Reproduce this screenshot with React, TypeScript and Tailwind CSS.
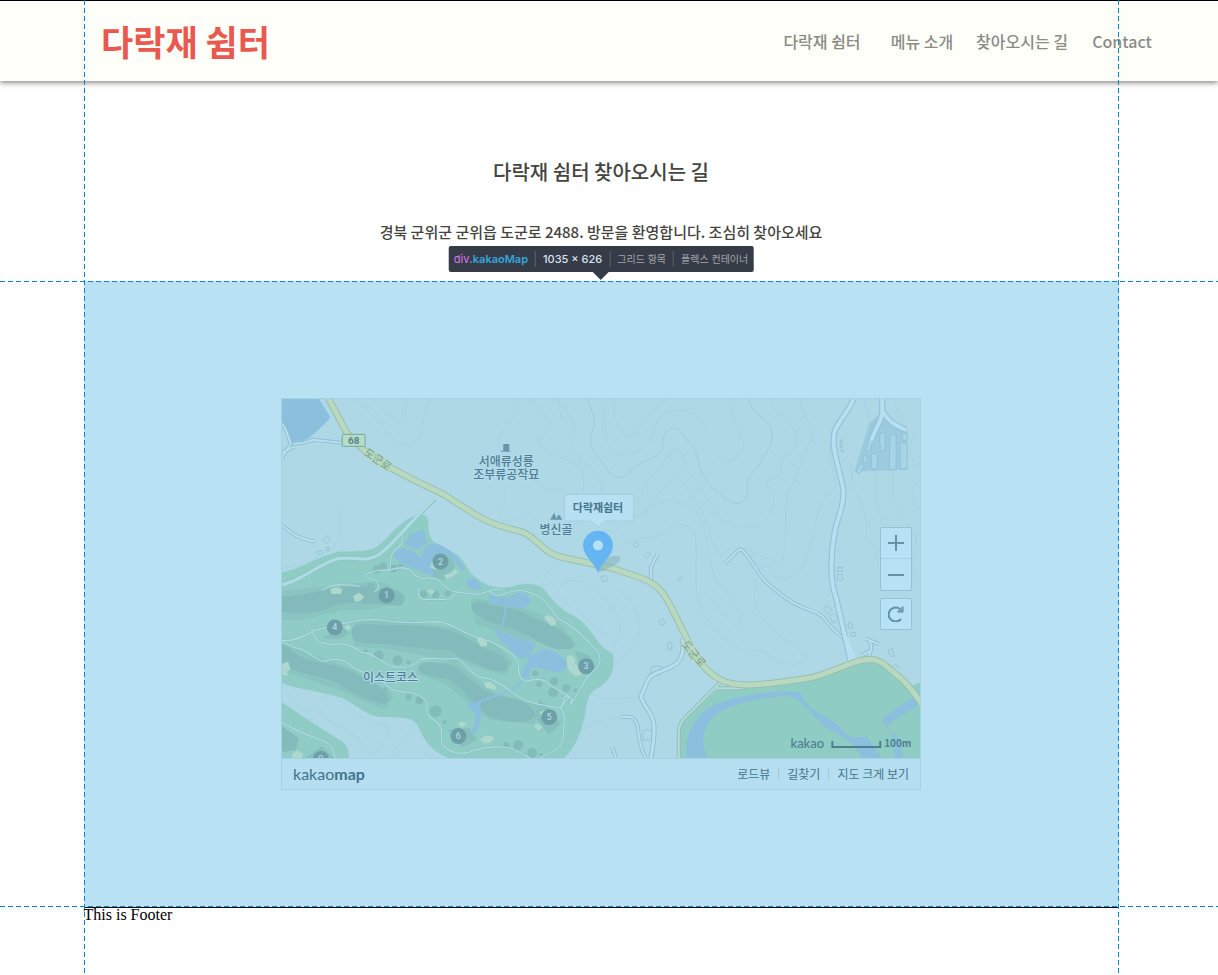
import React from 'react';

const NAV_ITEMS = ['다락재 쉼터', '메뉴 소개', '찾아오시는 길', 'Contact'];

const HOLES = [
  { n: 1, x: 105, y: 197 },
  { n: 2, x: 159, y: 163 },
  { n: 3, x: 305, y: 268 },
  { n: 4, x: 53, y: 229 },
  { n: 5, x: 268, y: 319 },
  { n: 6, x: 177, y: 338 },
  { n: 9, x: 39, y: 361 },
];

const CONTOURS = [
  'M75 0C90 18 98 22 107 35C115 45 125 48 132 45C142 38 140 20 148 0',
  'M90 0C102 12 108 20 118 23C128 20 122 8 126 0',
  'M232 0C238 12 230 22 222 30C214 40 216 55 228 62C240 66 246 72 252 80C262 92 270 92 282 90',
  'M251 0C256 12 272 20 270 28C264 38 252 40 262 50C275 58 295 62 300 72C306 82 300 92 304 98',
  'M277 0C285 15 298 25 292 38C288 52 300 60 310 70C322 82 320 92 322 96',
  'M318 0C328 15 322 35 328 48C336 60 350 56 362 50C378 38 370 14 390 12C412 8 415 20 428 28',
  'M334 0C330 15 338 34 346 38C358 40 356 28 366 18C376 6 384 2 390 0',
  'M352 108C364 95 362 82 374 74C386 64 384 50 398 50C405 60 402 68 412 78C420 90 424 96 432 108C438 118 446 128 456 128C468 130 484 128 490 112C500 96 482 86 486 82C510 78 492 66 510 54C522 40 512 22 496 12C490 8 492 4 492 0',
  'M355 118C370 114 372 100 382 90C394 80 392 74 396 76C402 84 410 94 418 106C428 122 426 138 440 158C456 136 476 160 500 164C508 158 502 120 508 92C520 74 520 60 528 46C538 28 518 12 520 0',
  'M322 130C338 140 340 120 356 118C370 112 382 96 396 104C416 106 420 118 424 134C430 150 428 168 436 184C450 196 462 214 462 234C452 228 440 214 430 200',
  'M330 155C350 140 366 136 374 140C388 128 400 120 414 132C418 158 412 180 418 204C424 222 436 236 452 246C470 258 480 246 492 260C510 268 520 268 525 260C520 248 500 242 484 222C468 204 474 180 482 164',
  'M454 0C448 20 460 34 464 46C460 60 446 68 436 58',
  'M553 34C545 48 552 70 556 88C545 98 536 108 534 132C526 150 530 170 508 180C490 180 478 170 470 156',
  'M584 0C588 20 590 30 600 52',
  'M562 60C575 60 570 78 574 90C584 110 588 124 586 140C596 148 598 152 597 170',
  'M595 72V98C600 120 606 130 600 140',
  'M613 72V100C620 120 632 128 636 140C632 160 630 178 640 184',
  'M640 80C630 88 630 102 640 112M614 0C618 20 626 32 634 36C626 50 632 66 640 70',
  'M216 118C230 100 220 95 225 85M216 118C225 128 245 120 252 110',
  'M276 0C280 8 276 14 284 22M258 200C262 178 268 166 284 162M278 192C284 176 300 180 316 194C330 206 345 220 336 244',
  'M276 192C278 206 302 214 310 224C326 240 340 240 332 256',
  'M336 192C356 204 364 226 354 244C346 258 338 262 334 268M311 294C318 306 345 298 362 298M288 346C296 330 322 320 346 318',
  'M35 305C40 298 50 294 57 300C74 316 84 322 105 328C108 340 98 346 92 358C84 352 80 340 62 332C48 324 38 316 35 305',
  'M0 170C20 166 36 160 50 150C62 138 60 120 56 108',
  'M1 288C14 302 16 312 24 313C34 306 40 320 56 326M134 324C128 340 112 346 110 360M147 350C142 354 146 358 150 360',
];

const GOLF_PATHS = [
  'M121 135C122 146 118 148 111 154C106 162 112 168 106 172C96 170 88 174 84 176C82 182 94 178 96 184C98 188 97 192 93 193',
  'M107 172C118 168 128 168 132 176C142 184 150 176 158 182C162 190 170 192 176 194L196 196C206 194 214 188 222 192',
  'M0 242C12 244 26 236 32 232C50 228 74 221 91 221C108 222 112 224 127 224C140 225 150 222 161 224C174 227 176 232 186 235C196 240 200 240 209 243C222 250 236 256 237 266C238 276 238 282 246 283C256 280 262 280 268 286L289 299',
  'M31 234C33 242 38 245 50 246C66 244 74 250 80 254C92 254 98 264 110 268C120 270 132 270 137 262C144 258 160 262 174 260C186 262 190 280 204 280C220 282 232 298 246 303C260 308 270 308 279 310L288 299',
  'M0 243L12 249C26 250 32 262 43 263C52 260 62 260 70 268C82 276 92 276 104 286C114 298 134 290 144 302C148 308 142 314 150 320C162 328 160 332 160 344C164 354 176 356 186 355C198 350 214 348 230 350L249 360',
  'M208 192C216 204 226 190 240 192C252 194 262 200 269 209C276 222 282 222 290 228C300 234 308 246 317 253C322 264 318 268 308 277C302 284 296 298 289 307L291 300L284 298L280 310C286 320 282 330 282 340C280 352 268 354 259 360',
  'M137 190C136 202 142 201 150 201H162C172 201 172 196 178 192',
  'M40 192C50 184 66 186 78 188',
  'M0 324C12 332 28 338 42 343C50 346 52 352 53 360',
];

const SMALL_ROADS = [
  'M0 25C5 30 6 38 9 45C5 52 2 53 0 60M0 54L12 48',
  'M0 126C10 136 18 140 33 143',
  'M377 155L370 169V184',
  'M444 164C450 162 456 150 461 151C468 156 476 174 486 184C498 194 506 202 518 207C528 212 536 212 543 219C550 228 558 238 566 241',
  'M331 348L335 360',
  'M340 319C350 318 354 318 357 329C358 342 360 352 365 360',
  'M588 262L591 250L590 242M585 240L599 246M591 252L582 257',
];

const TREES = [
  [89, 187, 3], [84, 253, 2], [97, 257, 5], [116, 262, 5], [127, 264, 2], [127, 299, 3], [138, 302, 4], [154, 313, 6],
  [163, 324, 2], [104, 291, 2], [142, 196, 4], [154, 196, 4], [166, 195, 3], [95, 171, 4], [101, 168, 4], [112, 170, 4],
  [254, 275, 3], [258, 286, 3], [273, 283, 4], [272, 294, 5], [285, 290, 4], [294, 292, 2], [225, 347, 3], [237, 347, 5],
  [251, 355, 5], [260, 357, 2], [119, 168, 3],
];

const SAND = [
  'M49 191l5-2l6 2l-1 4h-9z',
  'M72 198l5-3l5 3l-3 4l-5 1z',
  'M0 266l6-2l2 7l-4 3l2 3l-6-1z',
  'M149 168l4-9l3 3l-2 9z',
  'M163 177l6-2l4-4l4 2l-5 4l-7 3z',
  'M196 241l3-2l6 4v4l-5 1z',
  'M203 285l5-1l6 4v3l-9-2z',
  'M177 326l3-2l5 2l-4 3z',
  'M199 341l6-3l7 1l-2 5l-7 1z',
  'M263 219l4-2l6 3l2 6l-5 1z',
  'M286 259l5-2l3 4l-1 4l6 5l1 6l-5 2l-8-7z',
  'M259 314l5-2l1 4l-4 2zM253 328l4-2l4 3l-4 3z',
  'M11 356l4-3l6 3l-2 4h-8zM63 229l3-2l3 2l-3 3z',
  'M146 193l3-2l4 2l-3 3z',
];

const MAIN_ROAD =
  'M46 -2L65 34Q84 56 107 68L134 82L161 95L194 116C210 126 226 130 240 133C256 138 262 156 282 159L332 170L356 178C376 184 384 196 390 208L406 240C414 258 422 270 434 278C448 288 466 288 491 285C516 282 534 280 548 274L577 263C596 258 602 264 611 272Q630 286 642 307';

function MapDrawing() {
  return (
    <svg viewBox="0 0 640 360" preserveAspectRatio="xMidYMid slice" className="block h-full w-full" role="img" aria-label="다락재쉼터 지도">
      <rect width="640" height="360" fill="#aed8e6" />
      <g fill="none" stroke="#a7d2e1">
        {CONTOURS.map((d) => <path key={d} d={d} />)}
      </g>
      <path
        d="M306 0C312 14 314 20 313 28C309 36 309 44 311 50C320 60 328 74 332 78C340 80 344 78 349 73C356 66 362 62 370 60C380 54 383 50 382 42C384 34 388 28 393 29C402 30 404 40 412 48C420 58 414 68 427 83C436 94 446 102 456 105C466 104 469 96 466 86C468 74 480 68 482 60C490 48 495 38 489 26C484 18 468 14 469 0"
        fill="none"
        stroke="#9dccdf"
      />

      {/* lake and the lanes round it */}
      <path d="M0 0H37L48 17L47 21L32 35Q20 45 10 45L6 34L0 25Z" fill="#8bbfde" />
      <path d="M61 44L31 41L22 44L9 45" fill="none" stroke="#93bfd0" strokeWidth="4" />
      <path d="M61 44L31 41L22 44L9 45" fill="none" stroke="#b6dff0" strokeWidth="2" />

      {/* golf course */}
      <path
        d="M0 174C20 170 36 158 57 153C72 153 88 154 97 147C108 138 118 122 134 117C145 114 147 118 147 128C146 144 160 148 168 152C184 158 184 172 196 180C208 190 222 190 232 188C242 184 256 184 264 192C274 206 282 212 292 217C308 226 312 238 322 249L332 256C334 272 330 282 318 289C308 294 307 300 305 310C302 332 294 350 283 360H167C150 354 142 342 136 327C130 318 116 320 101 319C84 318 74 306 61 300C44 294 20 292 0 285Z"
        fill="#8fccc5"
      />
      <path d="M0 304L31 325L61 344Q68 349 67 360H0Z" fill="#8fccc5" />
      <g fill="#89c4c0" stroke="#89c4c0" strokeWidth="9" strokeLinejoin="round">
        <path d="M0 197L60 190L100 188L120 200L85 207L62 207L20 217H0Z" />
        <path d="M76 227L117 227L174 234L212 250L226 264L222 272L181 260L111 247L76 244Z" />
        <path d="M0 250L67 274L107 299L101 306L54 286L0 267Z" />
        <path d="M140 272L171 267L212 299L252 310L250 321L209 317L167 282Z" />
        <path d="M194 204L242 214L276 229L290 246L242 236L198 222Z" />
      </g>
      <g fill="#83babb">
        <path d="M0 198C20 198 36 192 52 190C70 188 90 186 98 192H116C124 198 124 206 118 207C104 208 98 204 86 206C68 202 60 206 50 208C34 216 20 216 0 213Z" />
        <path d="M74 227C90 224 100 228 117 227C140 228 160 228 176 235C192 242 200 250 212 253C228 260 230 272 222 273C206 274 196 264 181 260C168 250 160 250 154 251L111 247C98 244 84 246 76 244C68 240 68 230 74 227Z" />
        <path d="M0 247C8 248 12 256 22 260C40 266 52 266 67 272C82 280 94 284 104 294C110 304 106 308 96 304C78 300 66 290 54 284C38 278 20 276 0 267Z" />
        <path d="M137 270C138 262 150 264 160 265C174 266 182 276 194 285C208 298 222 298 236 301C252 308 258 316 250 321C240 326 222 324 209 319C196 312 184 292 172 284C160 276 140 280 137 270Z" />
        <path d="M191 212C188 200 200 202 209 207C222 208 234 210 242 214C256 222 272 226 284 236C296 244 294 252 284 251C264 252 256 240 242 235C228 228 220 228 204 222Z" />
        <path d="M0 328L17 340L14 352L0 354Z" />
      </g>
      <g fill="#86bfbd">
        <circle cx="160" cy="168" r="13" />
        <path d="M41 240L60 228L68 234L58 241ZM258 300L280 325L268 337L254 320ZM294 252L309 258L316 272L300 270ZM166 332L188 330L196 342L180 350Z" />
        <path d="M24 360L40 348L52 360Z" />
        {TREES.map(([x, y, r]) => <circle key={`${x}-${y}`} cx={x} cy={y} r={r} fill="#83bbb9" />)}
      </g>
      <g fill="#8bbfde">
        <path d="M123 146L128 137L142 130L145 144L136 151Z" />
        <path d="M112 156C114 148 124 148 130 152L140 160C140 150 146 146 154 145C166 148 176 156 184 172L180 172C172 160 166 154 158 156C150 160 152 170 152 178L141 174C132 168 120 170 112 156Z" />
        <path d="M184 184L187 180L194 180L201 189L198 192L187 190Z" />
        <path d="M206 197C214 196 220 200 226 199L238 194C248 194 252 204 247 207C240 212 230 208 222 206C212 208 206 204 206 197Z" />
        <path d="M211 229L222 235C234 240 246 240 255 246L248 258L262 251C272 252 280 254 287 267L281 274C268 274 262 270 252 269C246 274 250 280 246 280H241C240 270 244 266 249 260H239C232 256 228 248 220 244Z" />
        <path d="M185 305L200 304C197 310 202 318 199 322C198 330 194 336 190 337C190 330 196 326 194 316Z" />
      </g>
      <path d="M225 206L221 230M244 279C236 292 220 296 196 304" fill="none" stroke="#8bbfde" strokeWidth="2" />
      <g fill="none" stroke="#7fbcbf" strokeWidth="2">
        {GOLF_PATHS.map((d) => <path key={d} d={d} />)}
      </g>
      <g fill="none" stroke="#aedbe0" strokeWidth="1.3">
        {GOLF_PATHS.map((d) => <path key={d} d={d} />)}
      </g>
      <path d="M0 186C18 184 38 164 57 160C72 158 84 164 96 157C110 148 120 132 154 100" fill="none" stroke="#8cc2c6" strokeWidth="4" />
      <path d="M0 186C18 184 38 164 57 160C72 158 84 164 96 157C110 148 120 132 156 97M165 98L156 101M143 88L154 98" fill="none" stroke="#aedbe4" strokeWidth="3" />
      <g fill="#aed8ce" stroke="#aed8ce" strokeWidth="1" strokeLinejoin="round">
        {SAND.map((d) => <path key={d} d={d} />)}
      </g>

      {/* park and river in the south-east */}
      <path d="M399 360V335Q399 326 403 322L440 288L467 289L537 279L580 263L600 266L629 289L640 284V360Z" fill="#8fccc3" />
      <path d="M406 360C404 340 410 322 429 309C450 298 482 294 507 293L520 294C524 310 540 314 557 326C562 334 570 340 575 339H587L601 360H581C576 344 564 340 544 329C530 316 520 298 507 298C484 298 452 306 437 315C424 324 418 342 427 360Z" fill="#8bbfde" />
      <path d="M640 294L604 319L602 324L612 336L615 360H623L618 340L607 329L611 324L640 306Z" fill="#8bbfde" />

      {/* housing estate, north-east */}
      <path d="M589 24L601 14L612 24L627 31V71L574 73Z" fill="#9ccbe0" />
      <g fill="#a8d4e7" stroke="#90c1d8">
        <path d="M592 28l5-2l-3 10l-4-2zM589 38l4 1l-3 14l-4-1zM583 57h4v7h-4zM580 65l4 2l-5 8l-3-2zM591 55h6v15h-6zM600 34h5v18h-5v-8h-1zM610 36h6v35h-7zM622 34h5v8h-5zM620 44h7v26h-7z" />
      </g>
      <g fill="none" stroke="#98c5d6">
        <path d="M560 41h2v8h-2zM561 51h2v2h-2zM557 169h5v4h-5zM557 176h5v6h-5zM543 210l4-3l5 5l-4 4zM549 218l5-3l4 5l-5 5zM568 224h4v6h-4zM571 234h4v4h-4zM608 252l4-2l2 8h-4zM611 270l5-4l4 5M378 222l4-2l2 5l-4 2zM387 244h4v7h-4zM371 268h10v4l-12 4zM362 332h9v10h-9zM352 145l4-2l2 4l-4 2zM363 157l4-4l3 3l-4 4zM397 180l3-2l2 2l-3 3zM320 178l5-1l2 5l-5 1z" />
        <path d="M41 141l4-4l4 4l-4 4zM35 153l5-1l1 3l-5 1zM44 149h3v3h-3z" />
      </g>

      {/* white roads */}
      <g fill="none" stroke="#93c0d1" strokeWidth="4">
        {SMALL_ROADS.map((d) => <path key={d} d={d} />)}
      </g>
      <g fill="none" stroke="#b6dff0" strokeWidth="2">
        {SMALL_ROADS.map((d) => <path key={d} d={d} />)}
      </g>
      <g fill="none" strokeLinejoin="round">
        <path d="M402 240V252C400 268 390 268 378 274C364 278 366 288 360 298C362 308 372 314 373 326C374 340 372 350 370 360" stroke="#93c0d1" strokeWidth="5" />
        <path d="M402 240V252C400 268 390 268 378 274C364 278 366 288 360 298C362 308 372 314 373 326C374 340 372 350 370 360" stroke="#b6dff0" strokeWidth="3" />
        <path d="M573 0C568 14 556 24 554 34C550 50 562 78 563 92C564 110 556 120 554 136C550 160 550 184 556 200L570 262M602 0V15C600 24 594 32 591 42M602 12C608 22 614 26 626 31" stroke="#8fbfd2" strokeWidth="6" />
        <path d="M573 0C568 14 556 24 554 34C550 50 562 78 563 92C564 110 556 120 554 136C550 160 550 184 556 200L570 262M602 0V15C600 24 594 32 591 42M602 12C608 22 614 26 626 31" stroke="#b6e0f2" strokeWidth="4" />
        <path d="M565 238L568 264H578Q570 250 568 238Z" fill="#b6e0f2" />
        <path d="M398 360V335Q398 326 403 321L439 285M436 290H462" stroke="#8fbfbd" strokeWidth="4" />
        <path d="M398 360V335Q398 326 403 321L439 285M436 290H462" stroke="#b5dcd6" strokeWidth="2" />
      </g>

      {/* national road 68 */}
      <path d={MAIN_ROAD} fill="none" stroke="#9abfae" strokeWidth="7" />
      <path d={MAIN_ROAD} fill="none" stroke="#b8d9bf" strokeWidth="5" />
      <rect x="60.500" y="35.500" width="23" height="12" rx="1" fill="#b7dcc5" stroke="#76a79f" />

      {/* hole numbers */}
      <g className="font-['Roboto',sans-serif] text-[9px]" textAnchor="middle">
        {HOLES.map((hole) => (
          <g key={hole.n}>
            <circle cx={hole.x} cy={hole.y} r="8" fill="#6d9fa9" />
            <text x={hole.x} y={hole.y + 3} fill="#c0e3ec">{hole.n}</text>
          </g>
        ))}
      </g>

      {/* place names */}
      <g
        className="font-['Noto_Sans_CJK_KR',sans-serif] text-[12px] font-medium"
        textAnchor="middle"
        fill="#4f7d93"
        stroke="#b3dcea"
        strokeWidth="2"
        paintOrder="stroke"
      >
        <text>
          <tspan x="225" y="67">서애류성룡</tspan>
          <tspan x="225" y="80">조부류공작묘</tspan>
        </text>
        <text x="275" y="135">병신골</text>
        <text x="109" y="284">이스트코스</text>
      </g>
      <g className="font-['Noto_Sans_CJK_KR',sans-serif] text-[11px]" textAnchor="middle" fill="#6f9a92" stroke="#b8d9bf" strokeWidth="2" paintOrder="stroke">
        <text transform="translate(94 64) rotate(34)">도군로</text>
        <text transform="translate(410 258) rotate(50)">도군로</text>
      </g>
      <text x="72" y="45" textAnchor="middle" fill="#54858c" className="font-['Roboto',sans-serif] text-[10px] font-bold">68</text>
      <path d="M222 45h6v7h1v1h-9v-1h2zM269 121l4-7l3 7zM275 121l2-5l2 1l2 4z" fill="#6596ab" />

      {/* pin and its label */}
      <path d="M317 174C322 160 330 156 338 158C344 162 330 170 317 174Z" fill="#7fb2b5" opacity="0.5" />
      <path d="M317 174C312 163 302 157 302 147A15 15 0 0 1 332 147C332 157 322 163 317 174Z" fill="#64b5f2" />
      <circle cx="317" cy="147" r="5" fill="#b7e1f4" />
      <path d="M286.500 95.500H350.500Q352.500 95.500 352.500 97.500V120.500Q352.500 122.500 350.500 122.500H324L317 128.500L310 122.500H286.500Q283.500 122.500 283.500 120.500V97.500Q283.500 95.500 286.500 95.500Z" fill="#b7e0f3" stroke="#a2cee0" />
      <text x="317" y="113" textAnchor="middle" fill="#44748a" className="font-['Noto_Sans_CJK_KR',sans-serif] text-[11px] font-bold">다락재쉼터</text>

      {/* scale */}
      <g fill="#4e7f91">
        <text x="510" y="350" className="font-['Lato',sans-serif] text-[13px] font-medium">kakao</text>
        <text x="604" y="349" className="font-['Noto_Sans_CJK_KR',sans-serif] text-[10px] font-bold">100m</text>
      </g>
      <path d="M552 343V349H600V343" fill="none" stroke="#4e7f91" strokeWidth="2" />
    </svg>
  );
}

function MapControls() {
  return (
    <div className="absolute top-32 right-2 flex w-8 flex-col gap-[7px]">
      <div className="flex flex-col rounded-xs border border-[#97c2d6] bg-[#b7e1f4]">
        <button type="button" aria-label="확대" className="flex h-[31px] items-center justify-center border-b border-[#a6d0e2]">
          <svg viewBox="0 0 16 16" className="size-4" stroke="#6392a8" strokeWidth="2"><path d="M0 8H16M8 0V16" /></svg>
        </button>
        <button type="button" aria-label="축소" className="flex h-[31px] items-center justify-center">
          <svg viewBox="0 0 16 16" className="size-4" stroke="#6392a8" strokeWidth="2"><path d="M0 8H16" /></svg>
        </button>
      </div>
      <button type="button" aria-label="새로고침" className="flex h-8 items-center justify-center rounded-xs border border-[#97c2d6] bg-[#b7e1f4]">
        <svg viewBox="0 0 16 16" className="size-4" fill="none" stroke="#6392a8" strokeWidth="2">
          <path d="M13 13A7 7 0 1 1 13 4" />
          <path d="M14.500 0.500V5.500H9.500" />
        </svg>
      </button>
    </div>
  );
}

function KakaoMap() {
  return (
    <div className="w-[640px] max-w-full border border-[#a5d1e3] bg-[#b5dff1] font-['Noto_Sans_CJK_KR',sans-serif]">
      <div className="relative h-[360px] border-b border-[#a5d1e3]">
        <MapDrawing />
        <MapControls />
      </div>
      <div className="flex h-[30px] items-center justify-between px-[11px] text-[#44748a]">
        <a href="#kakaomap" className="font-['Lato',sans-serif] text-base">kakao<b>map</b></a>
        <div className="flex items-center gap-2 text-xs">
          <a href="#roadview">로드뷰</a>
          <span className="h-3 w-px bg-[#a0cbdd]" />
          <a href="#route">길찾기</a>
          <span className="h-3 w-px bg-[#a0cbdd]" />
          <a href="#large">지도 크게 보기</a>
        </div>
      </div>
    </div>
  );
}

function InspectTooltip() {
  return (
    <div className="absolute bottom-full left-1/2 mb-[9px] flex h-[26px] -translate-x-1/2 items-center gap-[7px] rounded-xs bg-[#363c47] px-[5px] font-['Inter','Noto_Sans_CJK_KR',sans-serif] text-[11px] whitespace-nowrap text-[#a3a6ab]">
      <span className="font-semibold text-[#35a5dd]">
        <span className="font-normal text-[#dc76ee]">div</span>.kakaoMap
      </span>
      <span className="h-4 w-px bg-[#5c616b]" />
      <span className="font-medium text-[#dbe3ee]">1035 × 626</span>
      <span className="h-4 w-px bg-[#5c616b]" />
      <span className="text-[10px]">그리드 항목</span>
      <span className="h-4 w-px bg-[#5c616b]" />
      <span className="text-[10px]">플렉스 컨테이너</span>
      <span className="absolute top-full left-1/2 -translate-x-1/2 border-x-8 border-t-8 border-x-transparent border-t-[#363c47]" />
    </div>
  );
}

const GUIDE_X = 'pointer-events-none absolute inset-x-0 h-px bg-[repeating-linear-gradient(90deg,#0288c8_0_5px,transparent_5px_8px)]';
const GUIDE_Y = 'absolute inset-y-0 w-px bg-[repeating-linear-gradient(180deg,#0288c8_0_5px,transparent_5px_8px)]';

export default function App() {
  return (
    <div className="relative flex min-h-screen flex-col bg-white">
      <header className="flex h-[81px] items-center justify-between border-t border-black bg-[#fffffa] pr-[46px] pl-[101px] font-['Noto_Sans_CJK_KR',sans-serif] shadow-[0_1px_6px_rgba(0,0,0,0.6)]">
        <h1 className="text-[35px] leading-10 font-bold text-[#e9594f]">
          <a href="#home">다락재 쉼터</a>
        </h1>
        <nav className="grid grid-cols-[repeat(4,100px)] text-center font-medium text-[#8b8b86]">
          {NAV_ITEMS.map((item) => (
            <a key={item} href="#nav">{item}</a>
          ))}
        </nav>
      </header>

      <main>
        <div className="flex flex-col items-center gap-[34px] pt-[77px] pr-4 pb-[37px] text-center font-['Noto_Sans_CJK_KR',sans-serif] font-medium text-[#444440]">
          <h2 className="text-xl leading-7">다락재 쉼터 찾아오시는 길</h2>
          <p className="text-[15px] leading-6">경북 군위군 군위읍 도군로 2488. 방문을 환영합니다. 조심히 찾아오세요</p>
        </div>
        <div className="relative pr-4">
          <div className="relative mx-auto flex h-[626px] max-w-[1035px] items-center justify-center bg-[#b8e1f3]">
            <KakaoMap />
            <InspectTooltip />
          </div>
          <div className={`${GUIDE_X} top-0`} />
          <div className={`${GUIDE_X} bottom-0`} />
        </div>
      </main>

      <div className="pr-4">
        <footer className="mx-auto max-w-[1035px] border-t border-black font-['Liberation_Serif',serif] text-base leading-[14px] text-black">
          This is Footer
        </footer>
      </div>

      <div className="pointer-events-none absolute inset-0 pr-4">
        <div className="relative mx-auto h-full max-w-[1035px]">
          <div className={`${GUIDE_Y} left-0`} />
          <div className={`${GUIDE_Y} right-0`} />
        </div>
      </div>
    </div>
  );
}
